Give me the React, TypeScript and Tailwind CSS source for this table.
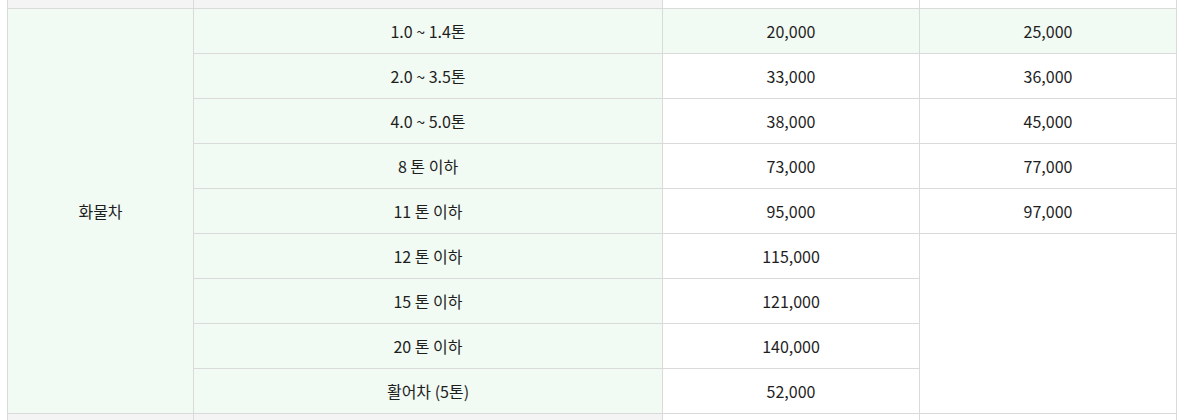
const rows = [
  { size: "1.0 ~ 1.4톤", a: "20,000", b: "25,000" },
  { size: "2.0 ~ 3.5톤", a: "33,000", b: "36,000" },
  { size: "4.0 ~ 5.0톤", a: "38,000", b: "45,000" },
  { size: "8 톤 이하", a: "73,000", b: "77,000" },
  { size: "11 톤 이하", a: "95,000", b: "97,000" },
  { size: "12 톤 이하", a: "115,000" },
  { size: "15 톤 이하", a: "121,000" },
  { size: "20 톤 이하", a: "140,000" },
  { size: "활어차 (5톤)", a: "52,000" },
];

const cell = "border border-[#dadada] p-0 text-center align-middle";

export default function App() {
  return (
    <div
      className="h-[420px] w-[1182px] overflow-hidden bg-white text-[16px] leading-[22px] text-[#1e1e1e]"
      style={{ fontFamily: '"Noto Sans CJK KR", "Noto Sans", sans-serif' }}
    >
      <table className="ml-[7px] w-[1170px] table-fixed border-collapse">
        <colgroup>
          <col className="w-[186px]" />
          <col className="w-[469px]" />
          <col className="w-[257px]" />
          <col className="w-[257px]" />
        </colgroup>
        <tbody>
          <tr className="h-[8px]">
            <td className={`${cell} border-t-0 bg-[#f4f4f4]`} />
            <td className={`${cell} border-t-0 bg-[#f4f4f4]`} />
            <td className={`${cell} border-t-0`} />
            <td className={`${cell} border-t-0`} />
          </tr>
          {rows.map((r, i) => (
            <tr key={r.size} className={`h-[45px] ${i === 0 ? "bg-[#f1faf3]" : ""}`}>
              {i === 0 && (
                <td rowSpan={rows.length} className={`${cell} bg-[#f1faf3] pt-[1px]`}>
                  화물차
                </td>
              )}
              <td className={`${cell} bg-[#f1faf3] pt-[1px]`}>{r.size}</td>
              <td className={`${cell} pt-[1px]`}>{r.a}</td>
              {r.b ? (
                <td className={`${cell} pt-[1px]`}>{r.b}</td>
              ) : i === 5 ? (
                <td rowSpan={4} className={cell} />
              ) : null}
            </tr>
          ))}
          <tr className="h-[45px]">
            <td className={`${cell} bg-[#f4f4f4]`} />
            <td className={`${cell} bg-[#f4f4f4]`} />
            <td className={cell} />
            <td className={cell} />
          </tr>
        </tbody>
      </table>
    </div>
  );
}
